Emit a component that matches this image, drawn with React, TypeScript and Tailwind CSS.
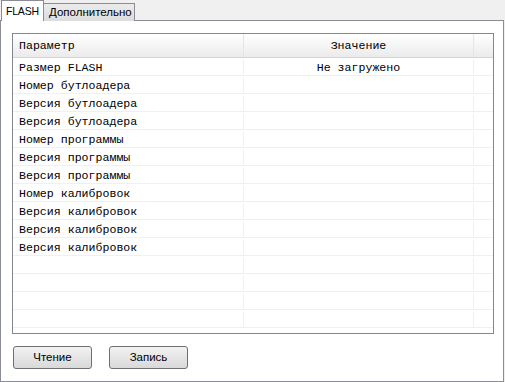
const rows = [
  ["Размер FLASH", "Не загружено"],
  ["Номер бутлоадера", ""],
  ["Версия бутлоадера", ""],
  ["Версия бутлоадера", ""],
  ["Номер программы", ""],
  ["Версия программы", ""],
  ["Версия программы", ""],
  ["Номер калибровок", ""],
  ["Версия калибровок", ""],
  ["Версия калибровок", ""],
  ["Версия калибровок", ""],
  ["", ""],
  ["", ""],
  ["", ""],
  ["", ""],
]

const mono = { fontFamily: '"Liberation Mono", "Courier New", monospace' }

export default function App() {
  return (
    <div
      className="w-[505px] h-[382px] bg-[#f0f0f0] flex flex-col text-[#000]"
      style={{ fontFamily: '"Liberation Sans", Tahoma, sans-serif' }}
    >
      {/* tabs */}
      <div className="flex items-end h-[21px] pl-[1px] relative z-10">
        <div className="h-[21px] pl-[4px] bg-white border border-b-0 border-[#898c95] text-[10.5px] tracking-[-0.2px] leading-[20px] w-[43px] whitespace-nowrap">
          FLASH
        </div>
        <div className="h-[18px] pl-[5px] bg-gradient-to-b from-[#ececec] to-[#dcdcdc] border border-b-0 border-l-0 border-[#898c95] text-[11.5px] leading-[17px] w-[91px] whitespace-nowrap">
          Дополнительно
        </div>
      </div>

      {/* panel */}
      <div className="-mt-[1px] h-[362px] w-[504px] bg-white border border-[#898c95] flex flex-col px-[11px] pt-[12px]">
        <div className="h-[301px] w-[482px] border border-[#828790] overflow-hidden flex">
          <div className="flex-1 flex flex-col">
            <div className="flex h-[24px] shrink-0 bg-gradient-to-b from-white to-[#ebebeb] border-b border-[#d5d5d5] text-[11.6px] leading-[24px]" style={mono}>
              <div className="w-[231px] pl-[6px] border-r border-[#e5e5e5]">Параметр</div>
              <div className="w-[230px] text-center border-r border-[#e5e5e5]">Значение</div>
              <div className="flex-1" />
            </div>
            {rows.map((r, i) => (
              <div key={i} className="flex h-[18px] shrink-0 border-b border-[#f0f0f0] text-[11.6px] leading-[16px] pt-[2px]" style={mono}>
                <div className="w-[231px] pl-[6px] border-r border-[#f0f0f0] whitespace-nowrap">{r[0]}</div>
                <div className="w-[230px] text-center border-r border-[#f0f0f0] whitespace-nowrap">{r[1]}</div>
                <div className="flex-1" />
              </div>
            ))}
          </div>
        </div>

        <div className="flex gap-[17px] mt-[12px] pl-[1px]">
          <button className="w-[79px] h-[23px] rounded-[3px] border border-[#707070] bg-gradient-to-b from-[#f2f2f2] to-[#d9d9d9] text-[11.5px] leading-[21px]">
            Чтение
          </button>
          <button className="w-[79px] h-[23px] rounded-[3px] border border-[#707070] bg-gradient-to-b from-[#f2f2f2] to-[#d9d9d9] text-[11.5px] leading-[21px]">
            Запись
          </button>
        </div>
      </div>
    </div>
  )
}
